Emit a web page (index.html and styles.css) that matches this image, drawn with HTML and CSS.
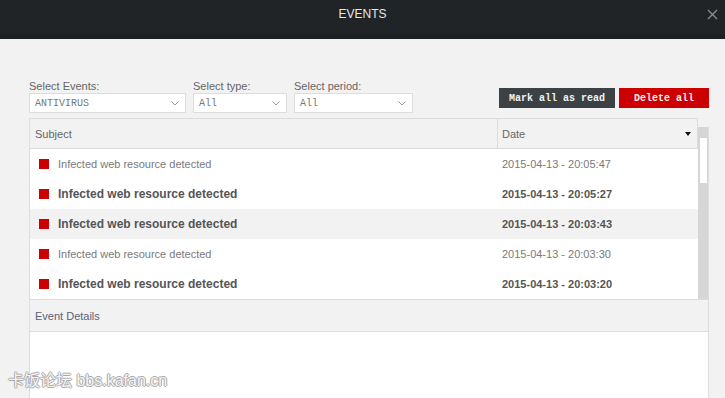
FILE: index.html
```html
<!DOCTYPE html>
<html>
<head>
<meta charset="utf-8">
<link rel="stylesheet" href="styles.css">
</head>
<body>
<div class="topbar">
  <span class="title">EVENTS</span>
  <svg class="close" width="11" height="11" viewBox="0 0 11 11"><path d="M1 1L10 10M10 1L1 10" stroke="#8a8c8e" stroke-width="1.4" fill="none"/></svg>
</div>
<div class="content">
  <div class="toolbar">
    <div class="filter f1">
      <label class="lbl">Select Events:</label>
      <div class="select"><span>ANTIVIRUS</span><svg width="8" height="5" viewBox="0 0 8 5"><path d="M0.5 0.5L4 4L7.5 0.5" stroke="#999" fill="none"/></svg></div>
    </div>
    <div class="filter f2">
      <label class="lbl">Select type:</label>
      <div class="select"><span>All</span><svg width="8" height="5" viewBox="0 0 8 5"><path d="M0.5 0.5L4 4L7.5 0.5" stroke="#999" fill="none"/></svg></div>
    </div>
    <div class="filter f3">
      <label class="lbl">Select period:</label>
      <div class="select"><span>All</span><svg width="8" height="5" viewBox="0 0 8 5"><path d="M0.5 0.5L4 4L7.5 0.5" stroke="#999" fill="none"/></svg></div>
    </div>
    <div class="actions">
      <button class="btn dark">Mark all as read</button>
      <button class="btn red">Delete all</button>
    </div>
  </div>
  <div class="grid">
    <div class="list">
      <div class="head">
        <div class="c-subj">Subject</div>
        <div class="c-date">Date<span class="tri"></span></div>
      </div>
      <div class="row"><div class="c-subj"><i class="sq"></i>Infected web resource detected</div><div class="c-date">2015-04-13 - 20:05:47</div></div>
      <div class="row unread"><div class="c-subj"><i class="sq"></i>Infected web resource detected</div><div class="c-date">2015-04-13 - 20:05:27</div></div>
      <div class="row unread hl"><div class="c-subj"><i class="sq"></i>Infected web resource detected</div><div class="c-date">2015-04-13 - 20:03:43</div></div>
      <div class="row"><div class="c-subj"><i class="sq"></i>Infected web resource detected</div><div class="c-date">2015-04-13 - 20:03:30</div></div>
      <div class="row unread"><div class="c-subj"><i class="sq"></i>Infected web resource detected</div><div class="c-date">2015-04-13 - 20:03:20</div></div>
    </div>
    <div class="scrollbar"><div class="thumb"></div></div>
  </div>
  <div class="details">Event Details</div>
  <div class="details-body"></div>
</div>
<div class="watermark">卡饭论坛 bbs.kafan.cn</div>
</body>
</html>
```
FILE: styles.css
```css
html, body { margin: 0; height: 100%; }
body {
  background: #f2f2f2;
  font-family: "Liberation Sans", Arial, sans-serif;
  font-size: 11px;
  color: #666;
  overflow: hidden;
  position: relative;
}
.topbar {
  height: 39px;
  background: #212427;
  box-shadow: inset 0 -5px 0 #1d2023;
  position: relative;
  display: flex;
  justify-content: center;
}
.title {
  color: #e4e6e8;
  font-size: 12px;
  line-height: 14px;
  padding-top: 7px;
}
.close { position: absolute; right: 7px; top: 9px; }
.content {
  padding: 41px 16px 0 29px;
  display: flex;
  flex-direction: column;
  height: calc(100% - 39px);
  box-sizing: border-box;
}
.toolbar { display: flex; align-items: flex-start; }
.filter { display: flex; flex-direction: column; margin-right: 7px; }
.f1 { width: 157px; }
.f2 { width: 94px; }
.f3 { width: 119px; }
.lbl { line-height: 13px; height: 13px; color: #666; }
.select {
  height: 20px;
  box-sizing: border-box;
  background: #fff;
  border: 1px solid #ddd;
  display: flex;
  align-items: center;
  justify-content: space-between;
  padding: 0 6px 0 5px;
  font-family: "Liberation Mono", "Courier New", monospace;
  font-size: 10px;
  color: #777;
}
.actions { margin-left: auto; display: flex; gap: 4px; padding-top: 8px; }
.btn {
  height: 20px;
  border: 0;
  margin: 0;
  padding: 0;
  font-family: "Liberation Mono", "Courier New", monospace;
  font-size: 10px;
  font-weight: bold;
  color: #f4f4f4;
}
.btn.dark { background: #3c4146; width: 116px; }
.btn.red { background: #cc0000; width: 90px; }
.grid { display: flex; margin-top: 5px; }
.list {
  width: 669px;
  border-left: 1px solid #dcdcdc;
  border-top: 1px solid #dcdcdc;
  box-sizing: border-box;
}
.head {
  display: flex;
  height: 30px;
  border-bottom: 1px solid #dcdcdc;
  border-right: 1px solid #dcdcdc;
  background: #f2f2f2;
  box-sizing: border-box;
}
.head > div { display: flex; align-items: center; padding-left: 5px; }
.head .c-subj { width: 462px; }
.head .c-date { flex: 1; border-left: 1px solid #dcdcdc; position: relative; padding-left: 4px; }
.tri {
  position: absolute;
  right: 6px;
  top: 13px;
  width: 0; height: 0;
  border-left: 3.5px solid transparent;
  border-right: 3.5px solid transparent;
  border-top: 4px solid #111;
}
.row {
  display: flex;
  height: 30px;
  background: #fff;
  align-items: center;
  color: #7a7a7a;
}
.row.hl { background: #f2f2f2; }
.row .c-subj { width: 467px; display: flex; align-items: center; padding-left: 9px; box-sizing: border-box; }
.row .c-date { padding-left: 5px; }
.row.unread { color: #555; font-weight: bold; }
.row.unread .c-subj { font-size: 12px; }
.sq { display: inline-block; width: 10px; height: 10px; background: #cc0000; margin-right: 9px; }
.scrollbar {
  width: 10px;
  margin-top: 9px;
  background: #d6d6d6;
  height: 172px;
  position: relative;
  border-right: 1px solid #dcdcdc;
}
.thumb { position: absolute; left: 2px; right: 1px; top: 11px; height: 45px; background: #fff; }
.details {
  height: 33px;
  border: 1px solid #dcdcdc;
  background: #f2f2f2;
  display: flex;
  align-items: center;
  padding-left: 5px;
  padding-top: 1px;
  color: #56627a;
  box-sizing: border-box;
}
.details-body {
  flex: 1;
  background: #fff;
  border-left: 1px solid #dcdcdc;
  border-right: 1px solid #dcdcdc;
}
.watermark {
  position: absolute;
  left: 8px;
  top: 371px;
  font-family: "Liberation Sans", "Noto Sans CJK SC", sans-serif;
  font-size: 16px;
  line-height: 20px;
  color: rgba(255,255,255,0.9);
  text-shadow: 1px 0 0 #aaa, -1px 0 0 #aaa, 0 1px 0 #aaa, 0 -1px 0 #aaa;
}
```
